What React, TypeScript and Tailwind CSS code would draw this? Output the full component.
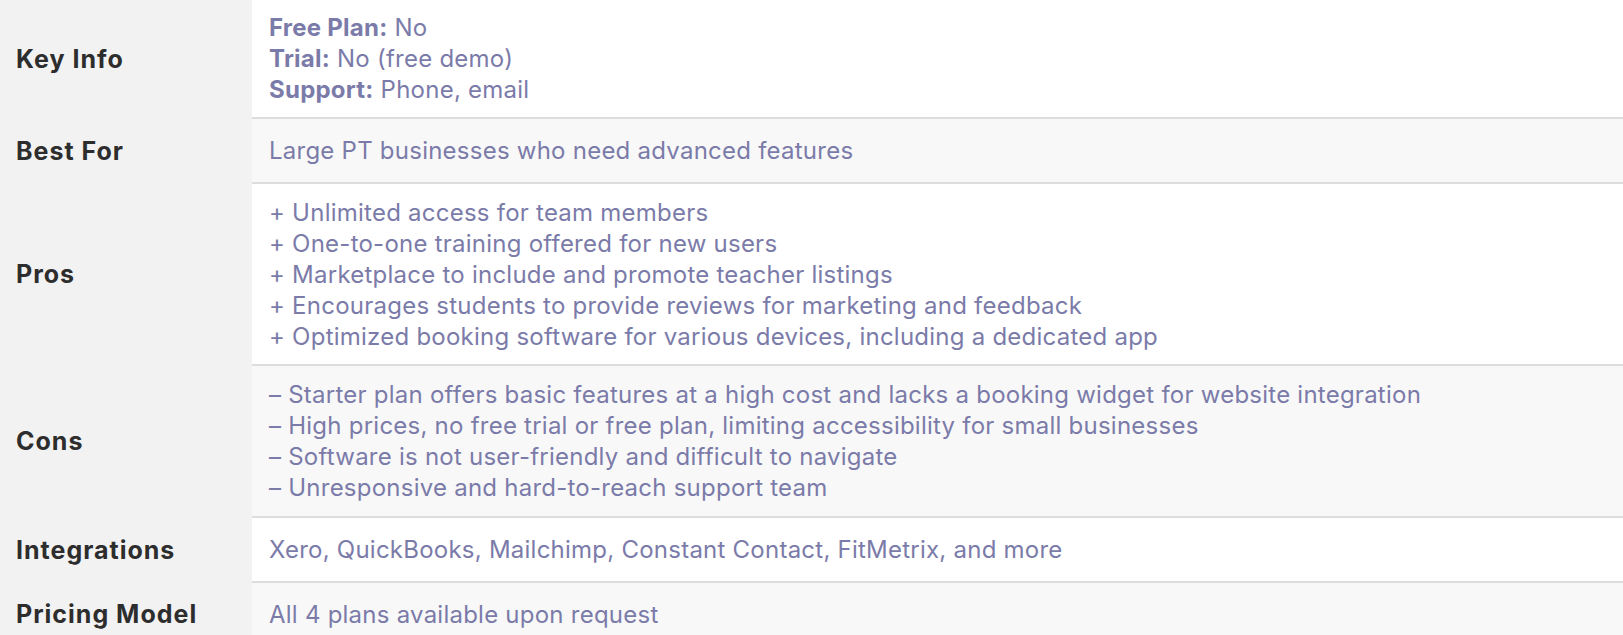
const rows = [
	{
		label: "Key Info",
		height: "h-[117px]",
		bg: "bg-white",
		lines: [
			{ strong: "Free Plan:", text: " No" },
			{ strong: "Trial:", text: " No (free demo)" },
			{ strong: "Support:", text: " Phone, email" },
		],
	},
	{
		label: "Best For",
		height: "h-[63px]",
		bg: "bg-[#f8f8f8]",
		lines: [{ text: "Large PT businesses who need advanced features" }],
	},
	{
		label: "Pros",
		height: "h-[180px]",
		bg: "bg-white",
		lines: [
			{ text: "+ Unlimited access for team members" },
			{ text: "+ One-to-one training offered for new users" },
			{ text: "+ Marketplace to include and promote teacher listings" },
			{ text: "+ Encourages students to provide reviews for marketing and feedback" },
			{ text: "+ Optimized booking software for various devices, including a dedicated app" },
		],
	},
	{
		label: "Cons",
		height: "h-[150px]",
		bg: "bg-[#f8f8f8]",
		lines: [
			{ text: "– Starter plan offers basic features at a high cost and lacks a booking widget for website integration" },
			{ text: "– High prices, no free trial or free plan, limiting accessibility for small businesses" },
			{ text: "– Software is not user-friendly and difficult to navigate" },
			{ text: "– Unresponsive and hard-to-reach support team" },
		],
	},
	{
		label: "Integrations",
		height: "h-[63px]",
		bg: "bg-white",
		lines: [{ text: "Xero, QuickBooks, Mailchimp, Constant Contact, FitMetrix, and more" }],
	},
	{
		label: "Pricing Model",
		height: "h-[63px]",
		bg: "bg-[#f8f8f8]",
		lines: [{ text: "All 4 plans available upon request" }],
	},
];

export default function App() {
	return (
		<div className="min-h-screen w-full bg-white font-['Inter',sans-serif]">
			{rows.map((row, i) => (
				<div key={row.label} className="flex w-full">
					{/* label column */}
					<div className="flex w-[252px] shrink-0 items-center bg-[#f2f2f2] pl-4">
						<span className="text-[25px] font-bold tracking-[0.04em] text-[#2d2d2d]">
							{row.label}
						</span>
					</div>
					<div
						className={`flex flex-1 flex-col ${
							i < rows.length - 1 ? "border-b-2 border-[#dddddd]" : ""
						}`}
					>
						<div
							className={`flex flex-col justify-center pl-[17px] ${row.height} ${row.bg}`}
						>
							{row.lines.map((line, j) => (
								<p
									key={j}
									className="text-[24px] leading-[31px] tracking-[0.01em] text-[#7b7ba9]"
								>
									{line.strong && <strong className="font-bold">{line.strong}</strong>}
									{line.text}
								</p>
							))}
						</div>
					</div>
				</div>
			))}
		</div>
	);
}
